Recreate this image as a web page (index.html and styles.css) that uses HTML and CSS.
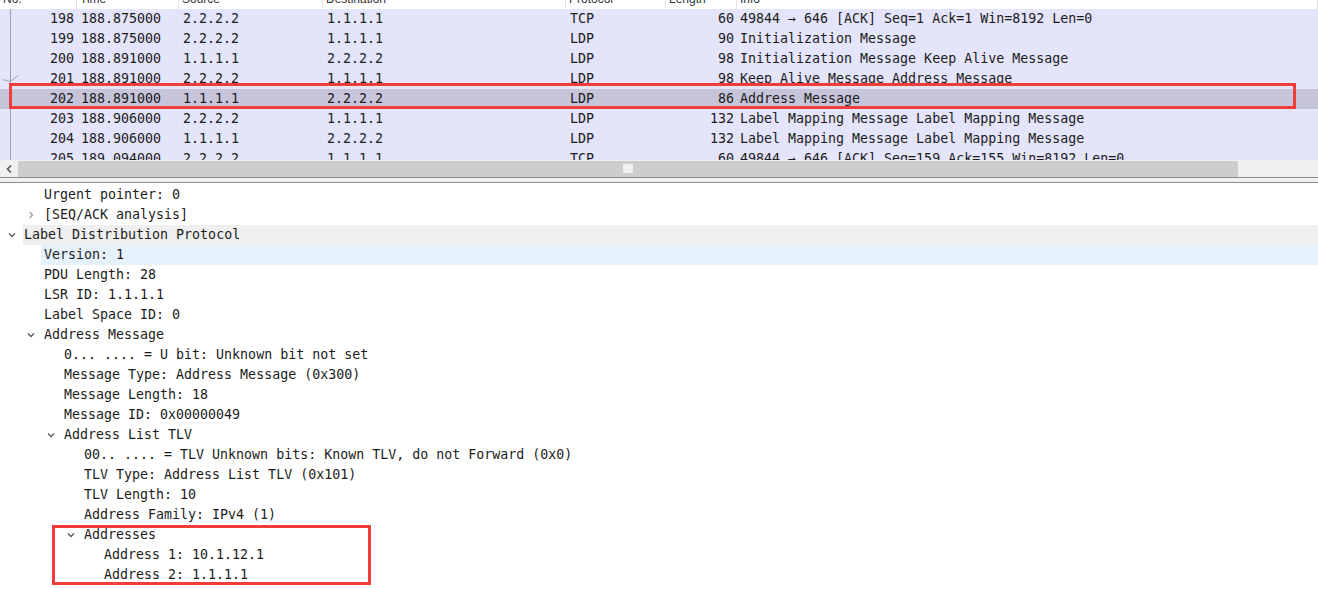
FILE: index.html
```html
<!DOCTYPE html>
<html>
<head>
<meta charset="utf-8">
<link rel="stylesheet" href="styles.css">
</head>
<body>
<div class="app">
  <div class="plist">
    <div class="phead">
      <div class="hc">No.</div>
      <div class="hc">Time</div>
      <div class="hc">Source</div>
      <div class="hc">Destination</div>
      <div class="hc">Protocol</div>
      <div class="hc">Length</div>
      <div class="hc">Info</div>
    </div>
    <div class="prows">
      <div class="row"><span class="c num">198</span><span class="c">188.875000</span><span class="c">2.2.2.2</span><span class="c">1.1.1.1</span><span class="c">TCP</span><span class="c num">60</span><span class="c info">49844 → 646 [ACK] Seq=1 Ack=1 Win=8192 Len=0</span></div>
      <div class="row"><span class="c num">199</span><span class="c">188.875000</span><span class="c">2.2.2.2</span><span class="c">1.1.1.1</span><span class="c">LDP</span><span class="c num">90</span><span class="c info">Initialization Message</span></div>
      <div class="row"><span class="c num">200</span><span class="c">188.891000</span><span class="c">1.1.1.1</span><span class="c">2.2.2.2</span><span class="c">LDP</span><span class="c num">98</span><span class="c info">Initialization Message Keep Alive Message</span></div>
      <div class="row"><span class="c num">201</span><span class="c">188.891000</span><span class="c">2.2.2.2</span><span class="c">1.1.1.1</span><span class="c">LDP</span><span class="c num">98</span><span class="c info">Keep Alive Message Address Message</span></div>
      <div class="row sel"><span class="c num">202</span><span class="c">188.891000</span><span class="c">1.1.1.1</span><span class="c">2.2.2.2</span><span class="c">LDP</span><span class="c num">86</span><span class="c info">Address Message</span></div>
      <div class="row"><span class="c num">203</span><span class="c">188.906000</span><span class="c">2.2.2.2</span><span class="c">1.1.1.1</span><span class="c">LDP</span><span class="c num">132</span><span class="c info">Label Mapping Message Label Mapping Message</span></div>
      <div class="row"><span class="c num">204</span><span class="c">188.906000</span><span class="c">1.1.1.1</span><span class="c">2.2.2.2</span><span class="c">LDP</span><span class="c num">132</span><span class="c info">Label Mapping Message Label Mapping Message</span></div>
      <div class="row"><span class="c num">205</span><span class="c">189.094000</span><span class="c">2.2.2.2</span><span class="c">1.1.1.1</span><span class="c">TCP</span><span class="c num">60</span><span class="c info">49844 → 646 [ACK] Seq=159 Ack=155 Win=8192 Len=0</span></div>
      <div class="treeline"></div>
      <svg class="relmark" width="20" height="10" viewBox="0 0 20 10"><polyline points="2.5,6.5 10,8.5 18.5,2.5" fill="none" stroke="#a8a8a8" stroke-width="1"/></svg>
      <div class="redbox rb1"></div>
    </div>
    <div class="hscroll">
      <div class="sarrow"><svg width="8" height="10" viewBox="0 0 8 10"><polyline points="6,1.5 2.5,5 6,8.5" fill="none" stroke="#555" stroke-width="1.6"/></svg></div>
      <div class="sthumb"><div class="sgrip"></div></div>
      <div class="strack"></div>
    </div>
  </div>
  <div class="splitter"></div>
  <div class="details">
    <div class="drow l1"><span class="arr"></span><span class="lbl">Urgent pointer: 0</span></div>
    <div class="drow l1"><span class="arr"><svg width="6" height="8" viewBox="0 0 6 8"><polyline points="1.5,1 4.5,4 1.5,7" fill="none" stroke="#9a9a9a" stroke-width="1.3"/></svg></span><span class="lbl">[SEQ/ACK analysis]</span></div>
    <div class="drow l0 grey"><span class="arr"><svg width="8" height="6" viewBox="0 0 8 6"><polyline points="1,1.5 4,4.5 7,1.5" fill="none" stroke="#555" stroke-width="1.3"/></svg></span><span class="lbl">Label Distribution Protocol</span></div>
    <div class="drow l1 blue"><span class="arr"></span><span class="lbl">Version: 1</span></div>
    <div class="drow l1"><span class="arr"></span><span class="lbl">PDU Length: 28</span></div>
    <div class="drow l1"><span class="arr"></span><span class="lbl">LSR ID: 1.1.1.1</span></div>
    <div class="drow l1"><span class="arr"></span><span class="lbl">Label Space ID: 0</span></div>
    <div class="drow l1"><span class="arr"><svg width="8" height="6" viewBox="0 0 8 6"><polyline points="1,1.5 4,4.5 7,1.5" fill="none" stroke="#555" stroke-width="1.3"/></svg></span><span class="lbl">Address Message</span></div>
    <div class="drow l2"><span class="arr"></span><span class="lbl">0... .... = U bit: Unknown bit not set</span></div>
    <div class="drow l2"><span class="arr"></span><span class="lbl">Message Type: Address Message (0x300)</span></div>
    <div class="drow l2"><span class="arr"></span><span class="lbl">Message Length: 18</span></div>
    <div class="drow l2"><span class="arr"></span><span class="lbl">Message ID: 0x00000049</span></div>
    <div class="drow l2"><span class="arr"><svg width="8" height="6" viewBox="0 0 8 6"><polyline points="1,1.5 4,4.5 7,1.5" fill="none" stroke="#555" stroke-width="1.3"/></svg></span><span class="lbl">Address List TLV</span></div>
    <div class="drow l3"><span class="arr"></span><span class="lbl">00.. .... = TLV Unknown bits: Known TLV, do not Forward (0x0)</span></div>
    <div class="drow l3"><span class="arr"></span><span class="lbl">TLV Type: Address List TLV (0x101)</span></div>
    <div class="drow l3"><span class="arr"></span><span class="lbl">TLV Length: 10</span></div>
    <div class="drow l3"><span class="arr"></span><span class="lbl">Address Family: IPv4 (1)</span></div>
    <div class="drow l3"><span class="arr"><svg width="8" height="6" viewBox="0 0 8 6"><polyline points="1,1.5 4,4.5 7,1.5" fill="none" stroke="#555" stroke-width="1.3"/></svg></span><span class="lbl">Addresses</span></div>
    <div class="drow l4"><span class="arr"></span><span class="lbl">Address 1: 10.1.12.1</span></div>
    <div class="drow l4"><span class="arr"></span><span class="lbl">Address 2: 1.1.1.1</span></div>
    <div class="redbox rb2"></div>
  </div>
</div>
</body>
</html>
```
FILE: styles.css
```css
html, body {
  margin: 0;
  padding: 0;
  background: #ffffff;
}
body {
  width: 1318px;
  height: 589px;
  overflow: hidden;
  font-family: "DejaVu Sans Mono", "Liberation Mono", monospace;
  font-size: 13.3px;
  color: #1c1c1c;
}
.app {
  display: flex;
  flex-direction: column;
  height: 589px;
  border-left: 1px solid #a0a0a0;
  box-sizing: border-box;
  margin-left: -1px;
}
.plist {
  display: flex;
  flex-direction: column;
}
.phead {
  height: 9px;
  overflow: hidden;
  display: grid;
  grid-template-columns: 77px 102px 144px 243px 100px 71px 1fr;
  background: #ffffff;
  font-family: "Liberation Sans", Arial, sans-serif;
  font-size: 12px;
  color: #333;
}
.hc {
  line-height: 16px;
  margin-top: -9px;
  padding-left: 3px;
  border-right: 1px solid #e3e3e3;
  white-space: nowrap;
}
.prows {
  position: relative;
  height: 151px;
  overflow: hidden;
}
.row {
  display: grid;
  grid-template-columns: 77px 102px 144px 243px 100px 71px 1fr;
  height: 20px;
  line-height: 20px;
  background: #e4e4fb;
  white-space: nowrap;
}
.row.sel {
  background: #c5c4d9;
}
.c {
  padding-left: 4px;
  overflow: hidden;
}
.c.num {
  text-align: right;
  padding-left: 0;
  padding-right: 3px;
}
.c.info {
  padding-left: 3px;
}
.treeline {
  position: absolute;
  left: 10px;
  top: 0;
  width: 1px;
  height: 151px;
  background: #a0a0a8;
}
.relmark {
  position: absolute;
  left: 0;
  top: 64px;
}
.redbox {
  position: absolute;
  border: 3px solid #f23b3b;
  box-sizing: border-box;
}
.rb1 {
  left: 9px;
  top: 74px;
  width: 1287px;
  height: 26px;
}
.hscroll {
  height: 17px;
  display: flex;
  background: #f0f0f0;
}
.sarrow {
  width: 18px;
  display: flex;
  align-items: center;
  justify-content: center;
}
.sthumb {
  width: 1220px;
  margin: 1px 0 0 0;
  background: #cdcdcd;
  position: relative;
}
.sgrip {
  position: absolute;
  left: 605px;
  top: 3px;
  width: 10px;
  height: 9px;
  background: #f0f0f0;
}
.strack {
  flex: 1;
}
.splitter {
  height: 4px;
  background: #f0f0f0;
  border-top: 1px solid #8c8c8c;
  border-bottom: 1px solid #8c8c8c;
}
.details {
  position: relative;
  flex: 1;
  padding-top: 2px;
  background: #ffffff;
}
.drow {
  display: flex;
  height: 20px;
  line-height: 20px;
  white-space: nowrap;
}
.arr {
  width: 21px;
  flex: none;
  display: flex;
  align-items: center;
  justify-content: center;
}
.lbl {
  flex: 1;
  padding-left: 3px;
}
.l0 { padding-left: 0; }
.l1 { padding-left: 20px; }
.l2 { padding-left: 40px; }
.l3 { padding-left: 60px; }
.l4 { padding-left: 80px; }
.l0 .arr { width: 23px; }
.l0 .lbl { padding-left: 1px; }
.grey .lbl { background: #efefef; }
.blue .lbl { background: #e5f1fb; }
.rb2 {
  left: 52px;
  top: 342px;
  width: 319px;
  height: 60px;
}
```
